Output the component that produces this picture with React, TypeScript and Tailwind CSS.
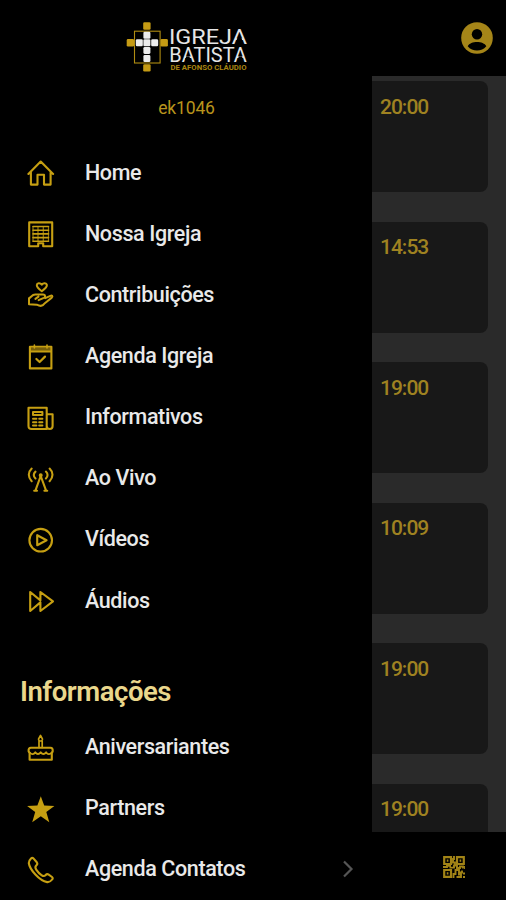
import type { ReactNode } from "react";

const GOLD = "#c69f12";

function Icon({ children }: { children: ReactNode }) {
  return (
    <svg
      width="28"
      height="28"
      viewBox="0 0 28 28"
      fill="none"
      stroke={GOLD}
      strokeWidth="2.1"
      strokeLinejoin="round"
      strokeLinecap="round"
      className="mt-px block shrink-0"
    >
      {children}
    </svg>
  );
}

const HomeIcon = (
  <Icon>
    <path d="M1.4 15 13.7 2.6 26.1 15M3.9 13.3V25.6H10.5V15.8H17V25.6H23.6V13.3" />
  </Icon>
);

const BuildingIcon = (
  <Icon>
    <path d="M2.2 2.4H25.2V26.2H16.2V23.2H11.2V26.2H2.2Z" />
    <path d="M6 6.5H21.5M6 10.2H21.5M6 13.9H21.5M6 17.6H21.5M6 21.2H21.5" strokeWidth="1.6" />
    <path d="M6 6.5V21M11 6.5V21M16.3 6.5V21M21.5 6.5V21" strokeWidth="1.2" strokeOpacity="0.75" />
  </Icon>
);

const HandHeartIcon = (
  <Icon>
    <path d="M14.8 10.2C11.5 7.8 9.6 6.2 9.8 4 10 1.8 13.2 1.4 14.8 3.7 16.3 1.4 19.6 1.8 19.9 4 20.1 6.2 18 7.8 14.8 10.2Z" strokeWidth="2" />
    <path d="M2 23.3V17.2C4 16.6 4.8 13.6 8.3 13.6H16C18.9 13.6 18.4 16.6 16.3 17.1L11.6 19.2M18.2 17.2 23.4 14.8C25 14.1 26.1 15.4 24.8 16.6L17.5 22.5C15.5 25.9 12.5 25.1 9.8 23.7L2 23.3M8.4 17.9 11.5 15.6" strokeWidth="2" />
  </Icon>
);

const CalendarIcon = (
  <Icon>
    <path d="M2.9 4.8H24.4V26.4H2.9ZM2.9 9.4H24.4" />
    <path d="M3.7 7.1H23.6" strokeOpacity="0.6" />
    <path d="M7.4 3V6M20 3V6" strokeWidth="1.6" />
    <path d="m9.4 17 3.2 3 5.4-5.4" strokeWidth="2.2" />
  </Icon>
);

const NewsIcon = (
  <Icon>
    <path d="M1.5 3.7H19.7V25H4.5Q1.5 25 1.5 22ZM19.7 10.2H25.6V22Q25.6 25 22.7 25 19.7 25 19.7 22" />
    <path d="M6 8H15.4V11H6ZM6 14.8H9.4M12.2 14.8H15.4M6 18.2H9.4M12.2 18.2H15.4M6 21.4H9.4M12.2 21.4H15.4" strokeWidth="2" />
  </Icon>
);

const AntennaIcon = (
  <Icon>
    <path d="M4.7 3.6C.8 7.3.9 12.3 4.7 16.2M8.5 6.6C6.2 8.7 6.2 11.4 8.5 13.5M22.6 3.6C26.5 7.3 26.4 12.3 22.6 16.2M18.9 6.6C21.1 8.7 21.1 11.4 18.9 13.5" strokeWidth="2.1" />
    <circle cx="13.7" cy="10.3" r="1.2" fill={GOLD} strokeWidth="1.6" />
    <path d="M13.7 11 8.4 25.7M13.7 11 19.1 25.7M7.2 25.8H10M17.4 25.8H20.2" strokeWidth="2.1" />
  </Icon>
);

const PlayIcon = (
  <Icon>
    <circle cx="13.7" cy="14.2" r="11.3" />
    <path d="M10.2 9.2V19.2L19.6 14.2Z" />
  </Icon>
);

const ForwardIcon = (
  <Icon>
    <path d="M3.2 5V24L13.4 15.4V24L26 14.4 13.4 5V13.4Z" />
  </Icon>
);

const CakeIcon = (
  <Icon>
    <path d="M13.5 1.5 15.4 4.8Q15.6 7 13.5 7 11.4 7 11.6 4.8ZM12 7.2V13.5M15.2 7.2V13.5" strokeWidth="1.7" />
    <path d="M3.9 13.7H23.4Q26 13.7 25.7 17.2L24.8 19.2V25.8H2.6V19.2L1.6 17.2Q1.3 13.7 3.9 13.7Z" />
    <path d="M2.8 18.5C4.8 21 6.8 20.5 8.3 18.2 10 20.6 12 20.6 13.7 18.2 15.4 20.6 17.4 20.6 19.1 18.2 20.7 20.6 22.8 21 24.7 18.5" strokeWidth="1.8" />
  </Icon>
);

const StarIcon = (
  <Icon>
    <path
      d="M13.8 1.2 17.2 10.6 27.4 10.9 19.3 17 22.3 27.2 13.8 21.2 5.2 27.2 8.2 17 .1 10.9 10.4 10.6Z"
      fill={GOLD}
      stroke="none"
    />
  </Icon>
);

const PhoneIcon = (
  <Icon>
    <path d="M6.4 2.4 9.8 6.3Q11 8 9.4 9.3 7.5 11 9.2 13.6 11.4 17 14.8 19.3 17 20.8 18.7 19 20 17.4 21.7 18.6L25 21Q26.4 22.1 25.1 23.5 23 26.4 20.2 26.1 14.4 25 8.4 18.5 2.4 12 1.8 7 1.7 4.8 4 2.5 5.2 1.4 6.4 2.4Z" />
  </Icon>
);

type Item = { label: string; icon: ReactNode; chevron?: boolean };

const mainItems: Item[] = [
  { label: "Home", icon: HomeIcon },
  { label: "Nossa Igreja", icon: BuildingIcon },
  { label: "Contribuições", icon: HandHeartIcon },
  { label: "Agenda Igreja", icon: CalendarIcon },
  { label: "Informativos", icon: NewsIcon },
  { label: "Ao Vivo", icon: AntennaIcon },
  { label: "Vídeos", icon: PlayIcon },
  { label: "Áudios", icon: ForwardIcon },
];

const infoItems: Item[] = [
  { label: "Aniversariantes", icon: CakeIcon },
  { label: "Partners", icon: StarIcon },
  { label: "Agenda Contatos", icon: PhoneIcon, chevron: true },
];

const times = ["20:00", "14:53", "19:00", "10:09", "19:00", "19:00"];

function MenuRow({ label, icon, chevron }: Item) {
  return (
    <li className="flex h-[61.15px] items-center pr-[18px] pl-[27px]">
      {icon}
      <span className="ml-[30px] flex-1 whitespace-nowrap text-[21.5px] leading-7 font-medium tracking-[-0.38px] text-[#e9e9e9]">
        {label}
      </span>
      {chevron && (
        <svg width="12" height="18" viewBox="0 0 12 18" fill="none" stroke="#555" strokeWidth="2.2">
          <path d="m2 1.5 7.5 7.5L2 16.5" />
        </svg>
      )}
    </li>
  );
}

function Logo() {
  const white = [
    [146.9, 35.2],
    [146.9, 42.8],
    [146.9, 50.4],
    [146.9, 58.6],
    [139.3, 42.8],
    [154.7, 42.8],
  ];
  const gold = [
    [146.9, 26],
    [130.4, 42.8],
    [164.2, 42.8],
    [146.9, 67.9],
  ];
  return (
    <svg width="124" height="54" viewBox="125 20 124 54" className="block">
      <rect x="134.5" y="31.2" width="25.6" height="31.8" fill="none" stroke="#b08c12" strokeWidth="1.1" />
      {white.map(([x, y]) => (
        <rect key={`${x}-${y}`} x={x - 3.5} y={y - 3.5} width="7" height="7" rx="1.3" fill="#ededed" />
      ))}
      {gold.map(([x, y]) => (
        <rect key={`${x}-${y}`} x={x - 3.7} y={y - 3.7} width="7.4" height="7.4" rx="1.3" fill="#c59b14" />
      ))}
      <g fontFamily="Roboto, sans-serif" fill="#e6e6e6">
        <text x="169" y="44" fontSize="20" textLength="78" lengthAdjust="spacingAndGlyphs">IGREJA</text>
        <text x="169.3" y="62" fontSize="19.5" textLength="77.5" lengthAdjust="spacingAndGlyphs">BATISTA</text>
        <text x="170.5" y="69.8" fontSize="6.6" fontWeight="700" fill="#a98510" textLength="76" lengthAdjust="spacingAndGlyphs">
          DE AFONSO CLÁUDIO
        </text>
      </g>
      {/* The wordmark's A has no crossbar */}
      <path d="M237.4 38h4l1.3 3.2h-6.6ZM186.3 56.4h3l1.3 3.2h-5.6ZM238.9 56.4h3l1.3 3.2h-5.6Z" fill="#000" />
    </svg>
  );
}

function QrIcon() {
  return (
    <svg width="22" height="22" viewBox="0 0 22 22" fill="none" stroke="#a18316" strokeWidth="2.2" className="block">
      <path d="M1.2 1.2H8V8H1.2ZM14 1.2H20.8V8H14ZM1.2 14H8V20.8H1.2Z" />
      <path d="M3.8 4.6H5.4M16.6 4.6H18.2M3.8 17.4H5.4" />
      <path d="M11 0V3H10V6.5H12V9M0 11H4V9.7H8M6.5 11.6H11V9.5H14V12H17V10.5H20V12.5M22 10V13M10.5 22V18H12.5V14H16V16.5H19V14.5M13.5 21H18V18.5H15M20 17.5H22M20 21H22" strokeWidth="1.9" />
    </svg>
  );
}

export default function App() {
  return (
    <div className="flex h-[900px] w-[506px] overflow-hidden bg-black font-['Roboto',sans-serif]">
      <nav className="flex h-full w-[372px] shrink-0 flex-col bg-black">
        <header className="flex h-[142px] flex-col items-center pt-5 pl-px">
          <Logo />
          <p className="mt-[22px] text-[17.5px] leading-6 tracking-[-0.15px] text-[#b8941c]">ek1046</p>
        </header>
        <ul>
          {mainItems.map((item) => (
            <MenuRow key={item.label} {...item} />
          ))}
        </ul>
        <h2 className="flex h-[85.5px] items-center pt-[36px] pl-5 text-[27.5px] leading-8 font-semibold tracking-[-0.45px] text-[#ead78c]">
          Informações
        </h2>
        <ul>
          {infoItems.map((item) => (
            <MenuRow key={item.label} {...item} />
          ))}
        </ul>
      </nav>

      <div className="flex h-full flex-1 flex-col">
        <header className="flex h-[76px] shrink-0 items-center justify-end bg-black pr-[13px]">
          <svg width="32" height="32" viewBox="0 0 32 32" className="block">
            <circle cx="16" cy="16" r="15.8" fill="#a58518" />
            <circle cx="16" cy="12.3" r="5.2" fill="#000" />
            <path d="M6.7 24.2C9.5 18.6 22.5 18.6 25.3 24.2 20.6 30 11.4 30 6.7 24.2Z" fill="#000" />
          </svg>
        </header>
        <main className="flex h-[756px] shrink-0 flex-col gap-[29.6px] overflow-hidden bg-[#2a2a2a] pt-[5px] pr-[18.5px]">
          {times.map((time, i) => (
            <article key={i} className="h-[111px] shrink-0 rounded-r-lg bg-[#181818] pt-[11.5px] pl-2">
              <time className="block text-[21px] leading-7 font-medium tracking-[-1px] text-[#9f8221]">{time}</time>
            </article>
          ))}
        </main>
        <footer className="flex flex-1 justify-center bg-black pt-[23.5px] pl-[30px]">
          <QrIcon />
        </footer>
      </div>
    </div>
  );
}
